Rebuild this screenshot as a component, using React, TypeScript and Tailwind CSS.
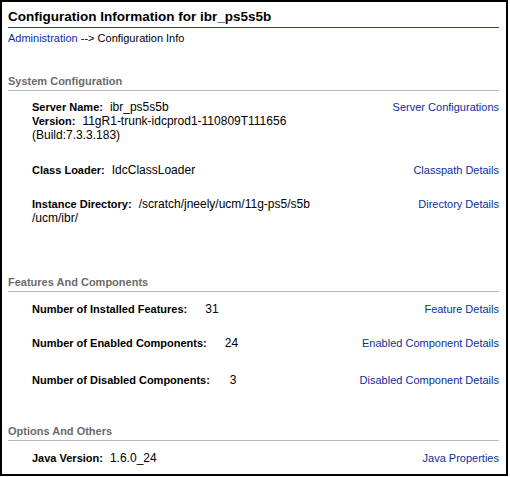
import React from "react";

const LINK = "text-[#0a2f9c]";

function Field({
  label,
  value,
  gap = "ml-[7px]",
}: {
  label: string;
  value: React.ReactNode;
  gap?: string;
}) {
  return (
    <>
      <span className="font-bold">{label}</span>
      <span className={`inline-block text-[12px] ${gap}`}>{value}</span>
    </>
  );
}

function Row({
  className,
  children,
  link,
}: {
  className?: string;
  children: React.ReactNode;
  link: string;
}) {
  return (
    <div className={`flex items-start justify-between pl-[24px] ${className ?? ""}`}>
      <div className="leading-[14px]">{children}</div>
      <a className={`${LINK} leading-[14px] whitespace-nowrap`}>{link}</a>
    </div>
  );
}

function SectionHeader({ className, title }: { className?: string; title: string }) {
  return (
    <div
      className={`font-bold text-[#6b6b6b] leading-[14px] pb-[2px] border-b border-[#b8b8b0] ${className ?? ""}`}
    >
      {title}
    </div>
  );
}

export default function App() {
  return (
    <div
      className="w-[508px] h-[476px] border-2 border-black bg-white pl-[6px] pr-[7px] pt-[6px] text-[11px] text-black"
      style={{ fontFamily: '"Liberation Sans", Arial, sans-serif' }}
    >
      <h1 className="text-[13.5px] font-bold leading-[18px] pb-px border-b border-[#1c4a7c]">
        Configuration Information for ibr_ps5s5b
      </h1>
      <div className="mt-[3px] leading-[14px]">
        <a className={LINK}>Administration</a> --&gt; Configuration Info
      </div>

      <SectionHeader className="mt-[29px]" title="System Configuration" />
      <Row className="mt-[9px]" link="Server Configurations">
        <Field label="Server Name:" value="ibr_ps5s5b" />
        <br />
        <Field label="Version:" value="11gR1-trunk-idcprod1-110809T111656" />
        <br />
        <span className="text-[12px]">(Build:7.3.3.183)</span>
      </Row>
      <Row className="mt-[21px]" link="Classpath Details">
        <Field label="Class Loader:" value="IdcClassLoader" />
      </Row>
      <Row className="mt-[20px]" link="Directory Details">
        <Field label="Instance Directory:" value="/scratch/jneely/ucm/11g-ps5/s5b" />
        <br />
        <span className="text-[12px]">/ucm/ibr/</span>
      </Row>

      <SectionHeader className="mt-[50px]" title="Features And Components" />
      <Row className="mt-[10px]" link="Feature Details">
        <Field label="Number of Installed Features:" value="31" gap="ml-[18px]" />
      </Row>
      <Row className="mt-[20px]" link="Enabled Component Details">
        <Field label="Number of Enabled Components:" value="24" gap="ml-[18px]" />
      </Row>
      <Row className="mt-[23px]" link="Disabled Component Details">
        <Field label="Number of Disabled Components:" value="3" gap="ml-[20px]" />
      </Row>

      <SectionHeader className="mt-[37px]" title="Options And Others" />
      <Row className="mt-[10px]" link="Java Properties">
        <Field label="Java Version:" value="1.6.0_24" />
      </Row>
    </div>
  );
}
